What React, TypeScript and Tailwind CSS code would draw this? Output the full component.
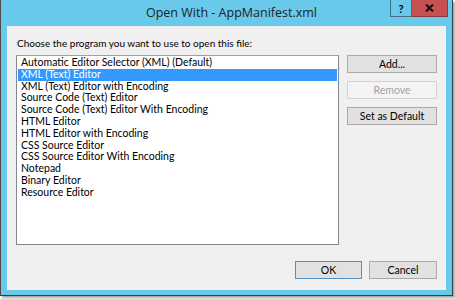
import { useState } from 'react'

const programs = [
  'Automatic Editor Selector (XML) (Default)',
  'XML (Text) Editor',
  'XML (Text) Editor with Encoding',
  'Source Code (Text) Editor',
  'Source Code (Text) Editor With Encoding',
  'HTML Editor',
  'HTML Editor with Encoding',
  'CSS Source Editor',
  'CSS Source Editor With Encoding',
  'Notepad',
  'Binary Editor',
  'Resource Editor',
]

const titleFont = { fontFamily: '"Open Sans", "Noto Sans", sans-serif' }
const bodyFont = { fontFamily: 'Lato, "Open Sans", sans-serif' }

function DlgButton({
  children,
  disabled,
  primary,
  className = '',
}: {
  children: React.ReactNode
  disabled?: boolean
  primary?: boolean
  className?: string
}) {
  const tone = disabled
    ? 'bg-[#f4f4f4] border-[#d2d2d2] text-[#a3a3a3]'
    : primary
      ? 'bg-[#e1e1e1] border-[#4f92c9] text-black'
      : 'bg-[#e1e1e1] border-[#a9a9a9] text-black'
  return (
    <button
      disabled={disabled}
      className={`h-[18px] flex items-center justify-center border text-[10.5px] leading-none ${tone} ${className}`}
    >
      {children}
    </button>
  )
}

export default function App() {
  const [selected, setSelected] = useState(1)

  return (
    <div className="w-[455px] h-[299px] bg-white overflow-hidden" style={bodyFont}>
      {/* Window frame */}
      <div className="w-[453px] h-[296px] flex flex-col bg-[#68c9ea] border-l border-r border-b border-l-[#4b4b4b] border-r-[#3c3c3c] border-b-[#3c3c3c] shadow-[2px_2px_2px_rgba(0,0,0,0.35)]">
        {/* Title bar */}
        <div className="h-[26px] shrink-0 flex items-start relative">
          <div className="flex-1 h-full flex items-center justify-center pl-[10px]">
            <span className="text-[12.5px] text-[#1e1e1e] leading-none" style={titleFont}>
              Open With - AppManifest.xml
            </span>
          </div>
          <div className="absolute top-0 right-[4px] flex">
            <div className="w-[22px] h-[17px] border border-t-0 border-[#3d6f86] flex items-center justify-center text-[11px] font-bold text-black leading-none">
              ?
            </div>
            <div className="w-[36px] h-[17px] bg-[#c75050] border border-t-0 border-l-0 border-[#8b3a3a] flex items-center justify-center">
              <svg width="9" height="8" viewBox="0 0 9 8">
                <path d="M1 0.5 L8 7.5 M8 0.5 L1 7.5" stroke="#111" strokeWidth="2" />
              </svg>
            </div>
          </div>
        </div>

        {/* Client area */}
        <div className="flex-1 mx-[6px] mb-[5px] bg-[#f0f0f0] flex flex-col px-[9px]">
          <div className="pt-[12px] h-[29px] text-[10px] leading-[11px] text-black pl-px whitespace-nowrap">
            Choose the program you want to use to open this file:
          </div>
          <div className="flex gap-[8px]">
            <div className="w-[323px] h-[190px] bg-white border border-[#828790] border-t-[#a0a0a0] pt-px px-px">
              {programs.map((p, i) => (
                <div
                  key={p}
                  onClick={() => setSelected(i)}
                  className={`h-[11.8px] leading-[11.8px] pl-[3px] text-[10.5px] whitespace-nowrap ${
                    i === selected ? 'bg-[#3399ff] text-white' : 'text-black'
                  }`}
                >
                  {p}
                </div>
              ))}
            </div>
            <div className="w-[90px] flex flex-col gap-[8px]">
              <DlgButton>Add...</DlgButton>
              <DlgButton disabled>Remove</DlgButton>
              <DlgButton>Set as Default</DlgButton>
            </div>
          </div>
          <div className="flex justify-end gap-[7px] mt-[16px]">
            <DlgButton primary className="w-[67px]">
              OK
            </DlgButton>
            <DlgButton className="w-[68px]">Cancel</DlgButton>
          </div>
        </div>
      </div>
    </div>
  )
}
